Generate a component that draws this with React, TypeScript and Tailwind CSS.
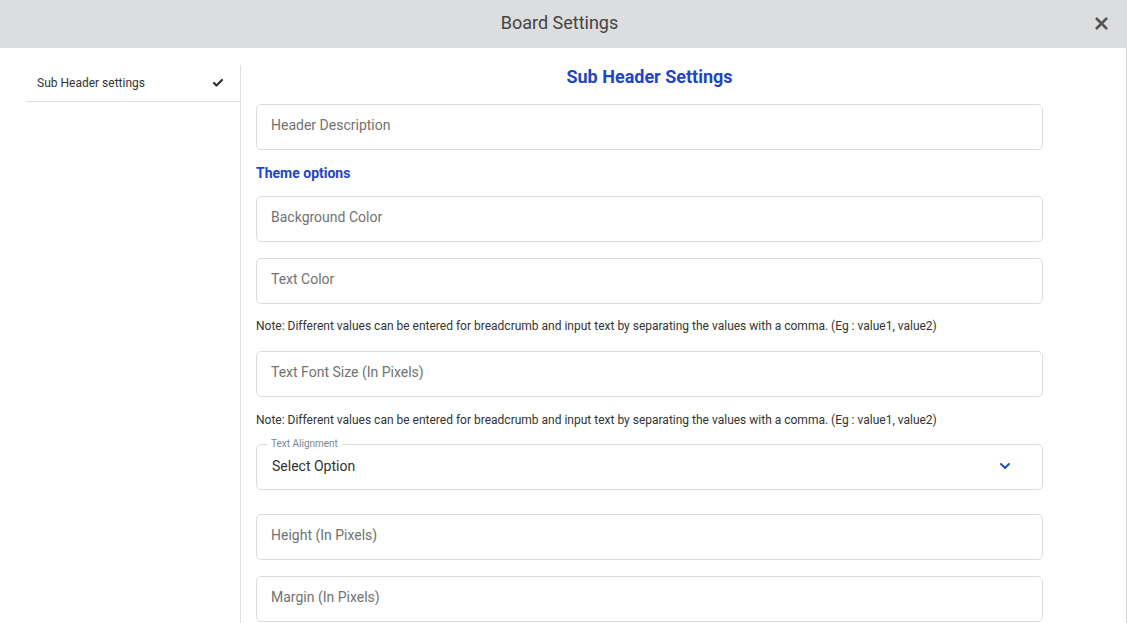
import { Check, ChevronDown, X } from "lucide-react";

const note =
  "Note: Different values can be entered for breadcrumb and input text by separating the values with a comma. (Eg : value1, value2)";

function Field({ placeholder, className = "" }: { placeholder: string; className?: string }) {
  return (
    <input
      type="text"
      placeholder={placeholder}
      className={
        "block h-[46px] w-full rounded-[5px] border border-[#dcdcdc] bg-white px-[14px] pb-[4px] text-[14px] text-[#333] outline-none placeholder:text-[#727272] " +
        className
      }
    />
  );
}

function Note({ className = "" }: { className?: string }) {
  return <p className={"text-[12px] leading-[16px] text-[#333] " + className}>{note}</p>;
}

export default function App() {
  return (
    <div className="flex h-[623px] w-[1127px] flex-col overflow-hidden bg-white font-['Roboto',sans-serif]">
      <header className="relative flex h-[48px] shrink-0 items-center justify-center bg-[#dcdddf] pr-[8px] pb-[4px]">
        <h1 className="text-[18px] text-[#444]">Board Settings</h1>
        <button type="button" className="absolute right-[16px] top-[14px] text-[#555]">
          <X size={19} strokeWidth={3.4} />
        </button>
      </header>

      <div className="flex min-h-0 flex-1 border-r border-[#d6d6d6]">
        <aside className="ml-[27px] mt-[17px] w-[214px] shrink-0 border-r border-[#dedede]">
          <div className="flex h-[37px] items-center justify-between border-b border-[#dedede] pl-[10px] pr-[16px]">
            <span className="text-[12px] text-[#333]">Sub Header settings</span>
            <Check size={12} strokeWidth={4.5} className="text-[#333]" />
          </div>
        </aside>

        <main className="w-[787px] shrink-0 pl-[15px] box-content">
          <h2 className="mt-[17px] mb-[15px] text-center text-[18px] font-bold leading-[24px] text-[#1f45c3]">
            Sub Header Settings
          </h2>
          <Field placeholder="Header Description" />
          <h3 className="mt-[13px] mb-[13px] text-[14px] font-bold leading-[20px] text-[#1f45c3]">
            Theme options
          </h3>
          <Field placeholder="Background Color" />
          <Field placeholder="Text Color" className="mt-[16px]" />
          <Note className="mt-[14px] mb-[17px]" />
          <Field placeholder="Text Font Size (In Pixels)" />
          <Note className="mt-[15px] mb-[16px]" />
          <div className="relative flex h-[46px] items-center justify-between rounded-[5px] border border-[#dcdcdc] pb-[2px] pl-[15px] pr-[29px]">
            <span className="absolute -top-[7px] left-[10px] bg-white px-[4px] text-[10px] leading-[12px] text-[#7c8593]">
              Text Alignment
            </span>
            <span className="text-[14px] text-[#333]">Select Option</span>
            <ChevronDown size={16} strokeWidth={3} className="text-[#1f52c9]" />
          </div>
          <Field placeholder="Height (In Pixels)" className="mt-[24px]" />
          <Field placeholder="Margin (In Pixels)" className="mt-[16px]" />
        </main>
      </div>
    </div>
  );
}
